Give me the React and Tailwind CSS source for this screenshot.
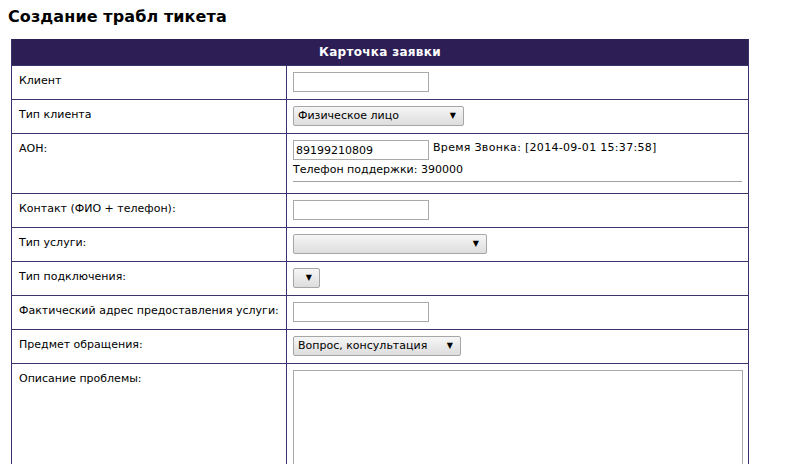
import React from 'react';

const font = { fontFamily: '"DejaVu Sans", Verdana, sans-serif' };

function TextInput({ value = '', className = 'w-[136px]' }) {
  return (
    <input
      type="text"
      defaultValue={value}
      className={`${className} block h-[20px] shrink-0 border border-[#a9a9a9] bg-white px-[2px] text-[11px] text-black outline-none`}
    />
  );
}

function Select({ label = '', className }) {
  return (
    <div
      className={`${className} flex h-[20px] items-center justify-between rounded-[2px] border border-[#a6a6a6] bg-gradient-to-b from-[#f6f6f6] to-[#dddddd] pl-[4px] pr-[7px] text-[11px] text-black`}
    >
      <span>{label}</span>
      <span className="text-[8px] leading-none">▼</span>
    </div>
  );
}

function Row({ label, children, height = 'h-[34px]' }) {
  return (
    <div className={`flex ${height} border-t border-[#39336e]`}>
      <div className="w-[274px] shrink-0 px-[7px] pt-[8px] text-[11px] leading-[13px] text-black">{label}</div>
      <div className="flex-1 border-l border-[#39336e] px-[6px] pt-[6px]">{children}</div>
    </div>
  );
}

export default function App() {
  return (
    <div className="h-[464px] w-[792px] overflow-hidden bg-white" style={font}>
      <h1 className="px-[8px] pt-[7px] text-[16px] font-bold leading-[20px] tracking-[0.1px] text-black">Создание трабл тикета</h1>

      <div className="ml-[11px] mt-[12px] w-[738px] border-x border-[#39336e]">
        <div className="flex h-[26px] items-center justify-center bg-[#2d1e56] text-[12px] font-bold tracking-[0.3px] text-white">
          Карточка заявки
        </div>

        <Row label="Клиент">
          <TextInput />
        </Row>

        <Row label="Тип клиента">
          <Select label="Физическое лицо" className="w-[171px]" />
        </Row>

        <Row label="АОН:" height="h-[60px]">
          <div className="flex items-start">
            <TextInput value="89199210809" />
            <span className="ml-[4px] mt-[1px] text-[11px] leading-[13px] tracking-[0.3px] text-black">Время Звонка: [2014-09-01 15:37:58]</span>
          </div>
          <div className="mt-[3px] text-[11px] leading-[13px] text-black">Телефон поддержки: 390000</div>
          <div className="mr-0 mt-[5px] border-t border-[#a0a0a0]" />
        </Row>

        <Row label="Контакт (ФИО + телефон):">
          <TextInput />
        </Row>

        <Row label="Тип услуги:">
          <Select className="w-[194px]" />
        </Row>

        <Row label="Тип подключения:">
          <Select className="w-[27px]" />
        </Row>

        <Row label="Фактический адрес предоставления услуги:">
          <TextInput />
        </Row>

        <Row label="Предмет обращения:">
          <Select label="Вопрос, консультация" className="w-[168px]" />
        </Row>

        <Row label="Описание проблемы:" height="h-[120px]">
          <textarea className="block h-[110px] w-[450px] resize-none border border-[#a9a9a9] bg-white outline-none" />
        </Row>
      </div>
    </div>
  );
}
